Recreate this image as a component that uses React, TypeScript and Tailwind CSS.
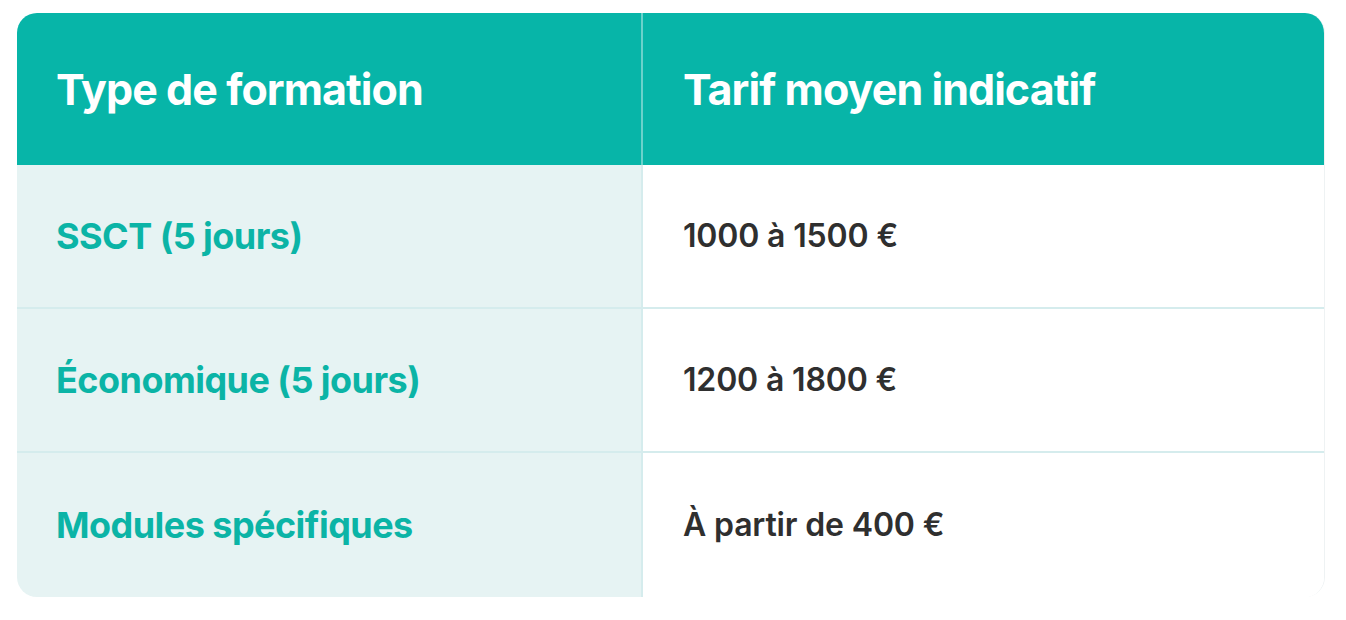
const rows = [
  { type: "SSCT (5 jours)", price: "1000 à 1500 €" },
  { type: "Économique (5 jours)", price: "1200 à 1800 €" },
  { type: "Modules spécifiques", price: "À partir de 400 €" },
];

export default function App() {
  return (
    <div className="min-h-screen bg-white pt-[13px] pl-[17px]" style={{ fontFamily: "Inter, 'Noto Sans', sans-serif" }}>
      <div className="w-[1308px] overflow-hidden rounded-[20px] border-r border-[#eef2f3]">
        <div className="grid grid-cols-[626px_1fr] bg-[#07b5a8] text-white">
          <div className="flex h-[152px] items-center border-r-2 border-white/40 pl-[39px] text-[43px] font-bold tracking-[-0.022em]">
            Type de formation
          </div>
          <div className="flex h-[152px] items-center pl-[40px] text-[43px] font-bold tracking-[-0.022em]">
            Tarif moyen indicatif
          </div>
        </div>
        {rows.map((row, i) => (
          <div
            key={i}
            className={
              "grid grid-cols-[626px_1fr] " +
              (i < rows.length - 1 ? "h-[144px] border-b-2 border-[#d5eced]" : "h-[144px]")
            }
          >
            <div className="flex items-center border-r-2 border-[#d5eced] bg-[#e6f3f3] pl-[39px] text-[36px] font-bold tracking-[-0.015em] text-[#0bb4a6]">
              {row.type}
            </div>
            <div className="flex items-center bg-white pl-[40px] text-[32px] font-semibold tracking-[-0.005em] text-[#2f2f2f]">
              {row.price}
            </div>
          </div>
        ))}
      </div>
    </div>
  );
}
